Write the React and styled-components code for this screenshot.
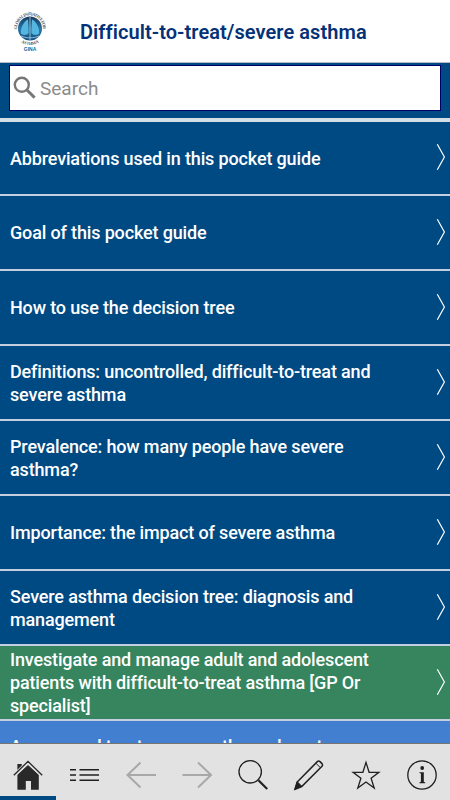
import styled, { createGlobalStyle } from "styled-components";

const topics = [
  { title: "Abbreviations used in this pocket guide" },
  { title: "Goal of this pocket guide" },
  { title: "How to use the decision tree" },
  { title: "Definitions: uncontrolled, difficult-to-treat and severe asthma" },
  { title: "Prevalence: how many people have severe asthma?" },
  { title: "Importance: the impact of severe asthma" },
  { title: "Severe asthma decision tree: diagnosis and management" },
  {
    title:
      "Investigate and manage adult and adolescent patients with difficult-to-treat asthma [GP Or specialist]",
    color: "#36855e",
  },
  {
    title: "Assess and treat severe asthma phenotypes [Specialist]",
    color: "#427fd0",
  },
];

const Logo = () => (
  <svg width="36" height="44" viewBox="0 0 36 44" overflow="visible">
    <defs>
      <path id="arcTop" d="M5.04 20.5 A13 13 0 1 1 30.96 20.5" />
      <path id="arcBottom" d="M1.5 19.5 A16.5 16.5 0 0 0 34.5 19.5" />
      <linearGradient id="globe" x1="0" y1="0" x2="0" y2="1">
        <stop offset="0" stopColor="#163a5e" />
        <stop offset="0.5" stopColor="#2876a8" />
        <stop offset="1" stopColor="#154f83" />
      </linearGradient>
    </defs>
    <circle cx="18" cy="19.5" r="12" fill="url(#globe)" />
    <path
      d="M16 10.5 C12 12 8.5 19 8.7 24.3 C11 27 15 26 16.6 24 Z"
      fill="#55b7df"
    />
    <path
      d="M20 10.5 C24 12 27.5 19 27.3 24.3 C25 27 21 26 19.4 24 Z"
      fill="#55b7df"
    />
    <path
      d="M18 8V31M9 27C14 29.5 22 29.5 27 27"
      stroke="#bee4ef"
      strokeWidth="0.7"
      fill="none"
    />
    <LogoText>
      <textPath href="#arcTop" textLength="42">
        GLOBAL INITIATIVE FOR
      </textPath>
    </LogoText>
    <LogoText>
      <textPath href="#arcBottom" startOffset="50%" textAnchor="middle">
        ASTHMA
      </textPath>
    </LogoText>
    <GinaText x="18" y="41.6" textAnchor="middle">
      GINA
    </GinaText>
  </svg>
);

const SearchIcon = () => (
  <svg width="24" height="24" viewBox="0 0 24 24">
    <g fill="none" stroke="#777" strokeWidth="2.4">
      <circle cx="8.8" cy="8.8" r="7" />
      <path d="M13.7 13.7L21.6 21.6" strokeWidth="2.9" />
    </g>
  </svg>
);

const Chevron = () => (
  <svg width="10" height="28" viewBox="0 0 10 28">
    <path
      d="M1.3 1.2L8.4 14L1.3 26.8"
      fill="none"
      stroke="#fff"
      strokeWidth="1.2"
    />
  </svg>
);

const HomeIcon = () => (
  <svg width="32" height="32" viewBox="0 0 32 32">
    <path
      d="M5.4 15.5L16 6L26.8 15.5V30.8H19V22H13.8V30.8H5.4Z"
      fill="#292929"
    />
    <path d="M5.4 5H9.8V7.5L5.4 11.2Z" fill="#292929" />
    <path
      d="M2 16.5L16 3L30 16.5"
      fill="none"
      stroke="#e2e2e2"
      strokeWidth="3.6"
    />
    <path
      d="M1.8 16.3L16 2.4L30.2 16.3"
      fill="none"
      stroke="#292929"
      strokeWidth="1.3"
    />
  </svg>
);

const ListIcon = () => (
  <svg width="32" height="32" viewBox="0 0 32 32">
    <path
      d="M2 10.7H8M11.5 10.7H31M2 16H8M11.5 16H31M2 21.3H8M11.5 21.3H31"
      stroke="#202020"
      strokeWidth="1.5"
    />
  </svg>
);

const BackIcon = () => (
  <svg width="32" height="32" viewBox="0 0 32 32">
    <path
      d="M31 16H2.5M15.5 3.5L2.5 16L15.5 28.5"
      fill="none"
      stroke="#a8a8a8"
      strokeWidth="2"
    />
  </svg>
);

const ForwardIcon = () => (
  <svg width="32" height="32" viewBox="0 0 32 32">
    <path
      d="M1.5 16H30M17 3.5L30 16L17 28.5"
      fill="none"
      stroke="#a8a8a8"
      strokeWidth="2"
    />
  </svg>
);

const FindIcon = () => (
  <svg width="32" height="32" viewBox="0 0 32 32">
    <g fill="none" stroke="#202020">
      <circle cx="13.2" cy="12.8" r="11.2" strokeWidth="1.3" />
      <path d="M21.4 21.3L30.2 30" strokeWidth="2.2" />
    </g>
  </svg>
);

const PencilIcon = () => (
  <svg width="32" height="32" viewBox="0 0 32 32">
    <path
      d="M4.2 23L24.3 2.6Q25.6 1.6 27 2.6L29 4.6Q30 6 29 7.2L8.7 27.5L2 30.3Z"
      fill="none"
      stroke="#202020"
      strokeWidth="1.5"
    />
    <path d="M4.3 22.8L8.8 27.3L1.8 30.4Z" fill="#202020" stroke="#202020" />
    <path d="M22.9 4.2L27.5 8.8" stroke="#202020" />
  </svg>
);

const StarIcon = () => (
  <svg width="32" height="32" viewBox="0 0 32 32">
    <path
      d="M16 3.4L19.1 13.3H28.9L21.1 19.3L24.2 29L16 23L7.8 29L10.9 19.3L3.1 13.3H12.9Z"
      fill="none"
      stroke="#202020"
      strokeWidth="1.3"
    />
  </svg>
);

const InfoIcon = () => (
  <svg width="32" height="32" viewBox="0 0 32 32">
    <circle
      cx="16"
      cy="16"
      r="14.2"
      fill="none"
      stroke="#202020"
      strokeWidth="1.3"
    />
    <circle cx="16.2" cy="9" r="1.9" fill="#202020" />
    <path
      d="M13.4 13.2H17.8V22.8L19.2 23.4V24.2H13.4V23.4L14.9 22.8V14.4L13.4 14Z"
      fill="#202020"
    />
  </svg>
);

const tabs = [
  { name: "Home", icon: <HomeIcon />, active: true },
  { name: "Contents", icon: <ListIcon /> },
  { name: "Back", icon: <BackIcon /> },
  { name: "Forward", icon: <ForwardIcon /> },
  { name: "Find", icon: <FindIcon /> },
  { name: "Notes", icon: <PencilIcon /> },
  { name: "Favourites", icon: <StarIcon /> },
  { name: "Info", icon: <InfoIcon /> },
];

const App = () => {
  return (
    <Screen>
      <GlobalStyle />
      <Header>
        <Logo />
        <h1>Difficult-to-treat/severe asthma</h1>
      </Header>
      <SearchBar>
        <SearchBox>
          <SearchIcon />
          <input type="text" placeholder="Search" />
        </SearchBox>
      </SearchBar>
      <TopicList>
        {topics.map((topic) => (
          <TopicRow key={topic.title} $color={topic.color}>
            <p>{topic.title}</p>
            <Chevron />
          </TopicRow>
        ))}
      </TopicList>
      <TabBar>
        {tabs.map((tab) => (
          <Tab key={tab.name} aria-label={tab.name} $active={tab.active}>
            {tab.icon}
          </Tab>
        ))}
      </TabBar>
    </Screen>
  );
};

const GlobalStyle = createGlobalStyle`
  * {
    box-sizing: border-box;
  }

  body {
    margin: 0;
    font-family: Roboto, sans-serif;
  }
`;

const Screen = styled.div`
  width: 450px;
  height: 800px;
  display: flex;
  flex-direction: column;
  overflow: hidden;
  background: #004a83;
`;

const Header = styled.header`
  flex: none;
  height: 63px;
  display: flex;
  align-items: center;
  gap: 32px;
  padding: 0 0 0 12px;
  background: #fff;
  border-bottom: 1px solid #b5bcc8;

  h1 {
    margin: 2px 0 0;
    color: #043278;
    font-size: 20px;
    font-weight: 600;
    letter-spacing: 0.07px;
    white-space: nowrap;
  }
`;

const LogoText = styled.text`
  font-family: "Liberation Serif", serif;
  font-size: 4.3px;
  font-weight: bold;
  fill: #52565b;
`;

const GinaText = styled.text`
  font-family: "Liberation Sans", sans-serif;
  font-size: 5px;
  font-weight: bold;
  fill: #1c6596;
`;

const SearchBar = styled.div`
  flex: none;
  height: 59px;
  padding: 2px 9px 0;
  border-bottom: 4px solid #d5dfe9;
`;

const SearchBox = styled.label`
  height: 46px;
  display: flex;
  align-items: center;
  gap: 3px;
  padding-left: 3px;
  background: #fff;
  border: 1px solid #00006e;

  input {
    flex: 1;
    padding: 0;
    border: none;
    outline: none;
    background: none;
    font-family: inherit;
    font-size: 19px;

    &::placeholder {
      color: #8c8c8c;
    }
  }
`;

const TopicList = styled.main`
  flex: 1;
  min-height: 0;
  overflow: hidden;
`;

const TopicRow = styled.div`
  height: 75px;
  display: flex;
  align-items: center;
  justify-content: space-between;
  padding: 0 4px 0 10px;
  background: ${(props) => props.$color || "#004a83"};
  border-bottom: 2px solid #c3cee0;

  &:first-child {
    height: 74px;
  }

  p {
    width: 376px;
    margin: 0;
    color: #fff;
    font-size: 18px;
    font-weight: 500;
    line-height: 23px;
    letter-spacing: -0.15px;
  }

  svg {
    margin-bottom: 2px;
  }
`;

const TabBar = styled.nav`
  flex: none;
  height: 57px;
  display: grid;
  grid-template-columns: repeat(8, 1fr);
  background: #e2e2e2;
  border-top: 1px solid #77736f;
`;

const Tab = styled.button`
  display: flex;
  align-items: center;
  justify-content: center;
  padding: 10px 0 0;
  background: none;
  border: none;
  border-bottom: 4px solid ${(props) => (props.$active ? "#004a83" : "transparent")};
`;

export default App;
